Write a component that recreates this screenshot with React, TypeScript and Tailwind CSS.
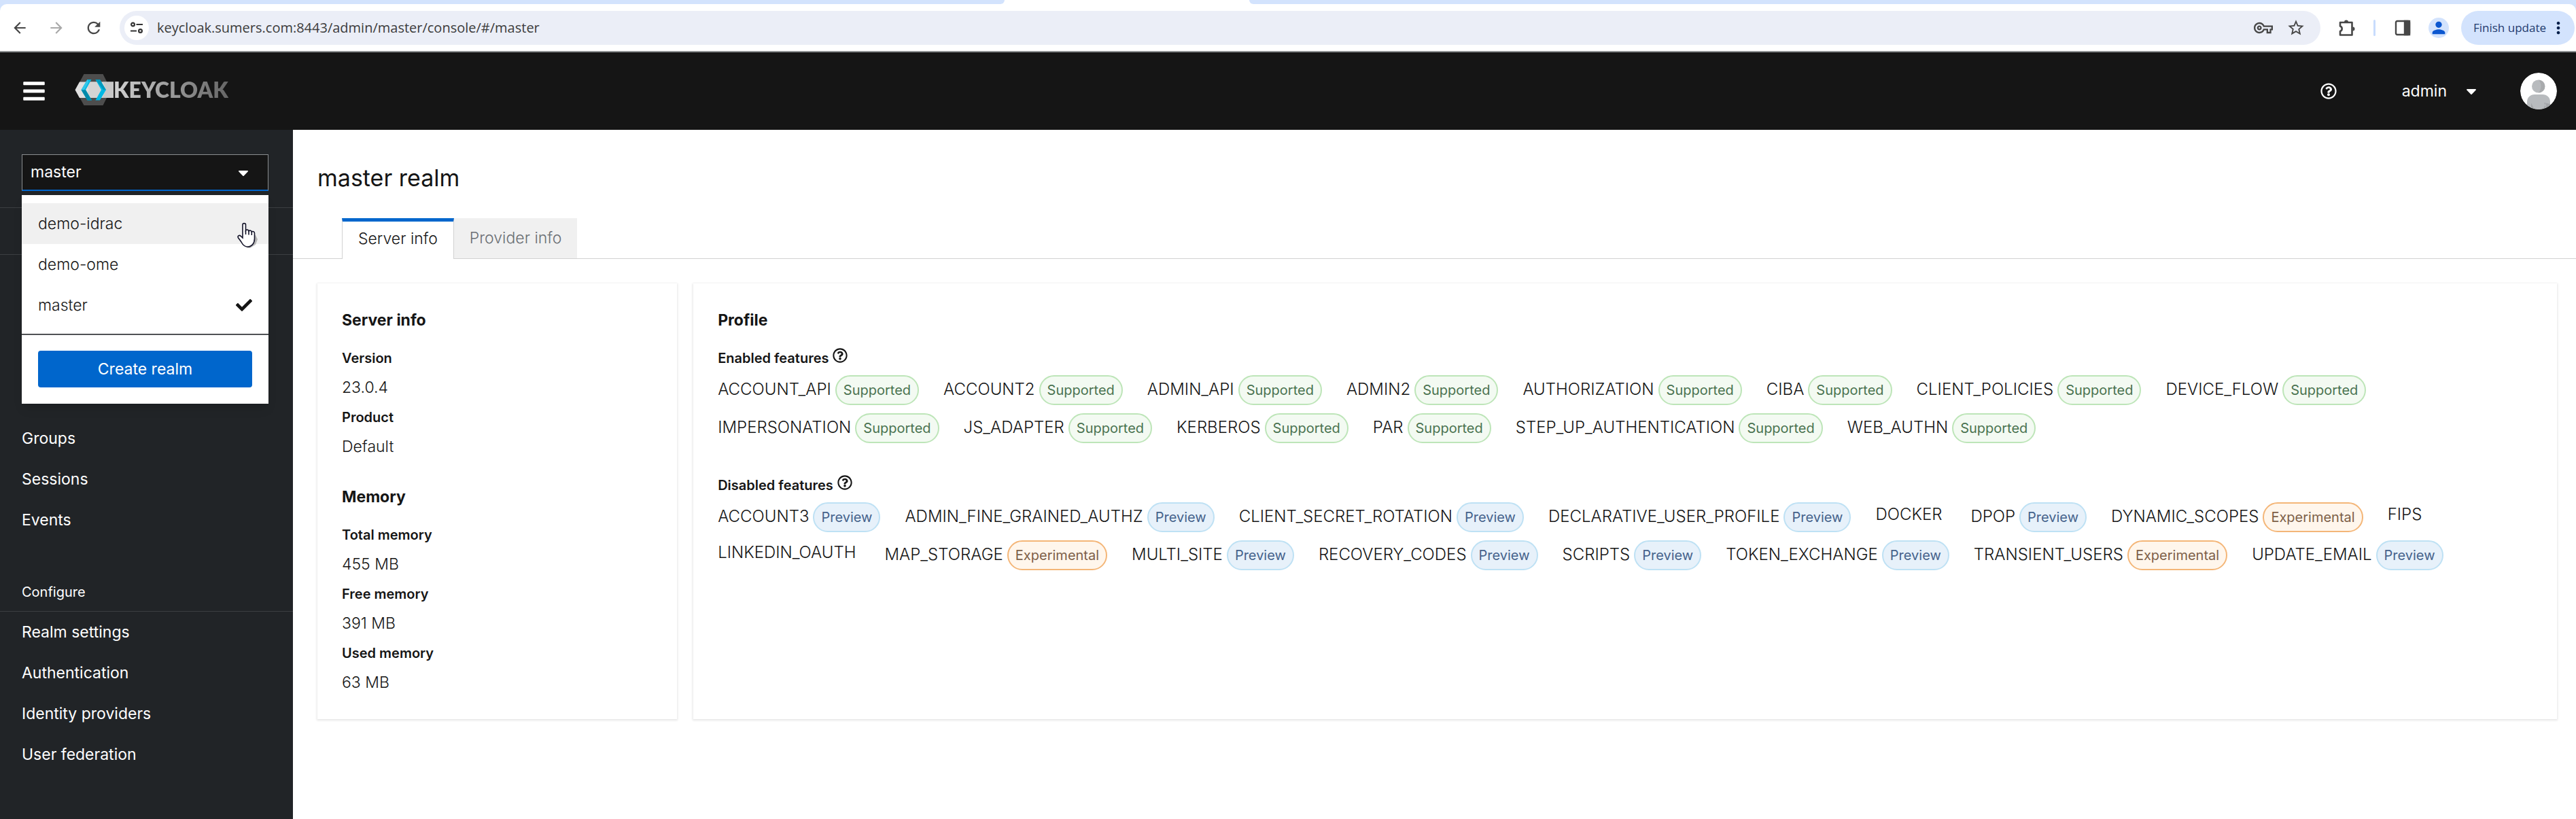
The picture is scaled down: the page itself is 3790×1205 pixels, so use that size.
import React from "react";
import { FaBars, FaCaretDown, FaCheck, FaRegQuestionCircle } from "react-icons/fa";
import {
  MdArrowBack,
  MdArrowForward,
  MdMoreVert,
  MdOutlineStarBorder,
  MdOutlineVpnKey,
  MdPerson,
  MdRefresh,
} from "react-icons/md";

type Level = "Supported" | "Preview" | "Experimental";
type Feature = { name: string; level?: Level };

const enabledFeatures: Feature[] = [
  { name: "ACCOUNT_API", level: "Supported" },
  { name: "ACCOUNT2", level: "Supported" },
  { name: "ADMIN_API", level: "Supported" },
  { name: "ADMIN2", level: "Supported" },
  { name: "AUTHORIZATION", level: "Supported" },
  { name: "CIBA", level: "Supported" },
  { name: "CLIENT_POLICIES", level: "Supported" },
  { name: "DEVICE_FLOW", level: "Supported" },
  { name: "IMPERSONATION", level: "Supported" },
  { name: "JS_ADAPTER", level: "Supported" },
  { name: "KERBEROS", level: "Supported" },
  { name: "PAR", level: "Supported" },
  { name: "STEP_UP_AUTHENTICATION", level: "Supported" },
  { name: "WEB_AUTHN", level: "Supported" },
];

const disabledFeatures: Feature[] = [
  { name: "ACCOUNT3", level: "Preview" },
  { name: "ADMIN_FINE_GRAINED_AUTHZ", level: "Preview" },
  { name: "CLIENT_SECRET_ROTATION", level: "Preview" },
  { name: "DECLARATIVE_USER_PROFILE", level: "Preview" },
  { name: "DOCKER" },
  { name: "DPOP", level: "Preview" },
  { name: "DYNAMIC_SCOPES", level: "Experimental" },
  { name: "FIPS" },
  { name: "LINKEDIN_OAUTH" },
  { name: "MAP_STORAGE", level: "Experimental" },
  { name: "MULTI_SITE", level: "Preview" },
  { name: "RECOVERY_CODES", level: "Preview" },
  { name: "SCRIPTS", level: "Preview" },
  { name: "TOKEN_EXCHANGE", level: "Preview" },
  { name: "TRANSIENT_USERS", level: "Experimental" },
  { name: "UPDATE_EMAIL", level: "Preview" },
];

const levelStyle: Record<Level, string> = {
  Supported: "border-[#bde5b8] bg-[#f3faf2] text-[#4a7350]",
  Preview: "border-[#bee1f4] bg-[#e7f1fa] text-[#46638c]",
  Experimental: "border-[#f4b678] bg-[#fff6ec] text-[#7d6048]",
};

function TuneIcon() {
  return (
    <svg viewBox="0 0 20 18" className="h-[18px] w-5" fill="none" stroke="#333" strokeWidth="2.2">
      <circle cx="4.5" cy="4" r="2.4" />
      <path d="M9.5 4H19M1 13.5h9" />
      <circle cx="15.5" cy="13.5" r="2.4" />
    </svg>
  );
}

function ExtensionIcon() {
  return (
    <svg viewBox="0 0 26 26" className="size-[26px]" fill="none" stroke="#474747" strokeWidth="2.6" strokeLinejoin="round">
      <path d="M3 5h17.5v18.5H3V18c3.600-1.200 3.600-6.300 0-7.500z" />
      <path d="M9 4.500a3 3 0 0 1 6 0zM21.500 11.500a3 3 0 0 1 0 6z" fill="#474747" stroke="none" />
    </svg>
  );
}

function SidePanelIcon() {
  return (
    <svg viewBox="0 0 24 24" className="size-6" fill="none" stroke="#474747" strokeWidth="2.4">
      <rect x="2" y="2" width="20" height="20" rx="2" />
      <path d="M15 2h7v20h-7z" fill="#474747" />
    </svg>
  );
}

function BrowserBar() {
  return (
    <div className="bg-[#d3e3fd]">
      <div className="flex h-[6px] bg-white">
        <div className="w-[39%] rounded-br-[10px] bg-[#d3e3fd]" />
        <div className="w-[360px]" />
        <div className="flex-1 rounded-bl-[10px] bg-[#d3e3fd]" />
      </div>
      <div className="flex h-[71px] items-center rounded-t-[10px] border-b-2 border-[#8e9192] bg-white pr-[2px] pl-4 font-['Open_Sans',sans-serif] text-[#474747]">
        <button aria-label="Back" className="mr-7 text-[26px]"><MdArrowBack /></button>
        <button aria-label="Forward" className="mr-7 text-[26px] text-[#a9a9a9]"><MdArrowForward /></button>
        <button aria-label="Reload" className="mr-6 text-[28px]"><MdRefresh /></button>
        <div className="flex h-[50px] min-w-0 flex-1 items-center rounded-full bg-[#ebeef7] pr-[22px] pl-[7px]">
          <button aria-label="Site information" className="mr-3 flex size-9 shrink-0 items-center justify-center rounded-full bg-white">
            <TuneIcon />
          </button>
          <input
            aria-label="Address"
            defaultValue="keycloak.sumers.com:8443/admin/master/console/#/master"
            className="min-w-0 flex-1 bg-transparent text-[20px] leading-8 text-[#3c3c3c] outline-none"
          />
          <button aria-label="Passwords" className="mr-5 text-[28px]"><MdOutlineVpnKey /></button>
          <button aria-label="Bookmark" className="text-[28px]"><MdOutlineStarBorder /></button>
        </div>
        <button aria-label="Extensions" className="ml-[26px]"><ExtensionIcon /></button>
        <span className="ml-[26px] h-6 w-[3px] rounded bg-[#c8dcfd]" />
        <button aria-label="Side panel" className="ml-7"><SidePanelIcon /></button>
        <button aria-label="Profile" className="ml-[26px] flex size-[30px] items-center justify-center rounded-full bg-[#d3e3fd] text-[28px] text-[#0b57d0]">
          <MdPerson />
        </button>
        <button className="ml-[18px] flex h-[50px] items-center gap-1 rounded-full bg-[#d3e3fd] pr-[10px] pl-[18px] text-[17px] text-[#1f3a6e]">
          Finish update
          <MdMoreVert className="text-[28px] text-[#041e49]" />
        </button>
      </div>
    </div>
  );
}

function Logo() {
  return (
    <a href="#/" aria-label="Keycloak" className="flex items-center pb-1">
      <svg viewBox="0 0 57 48" className="h-12 w-[57px]">
        <path d="M13.500 1h28L53 24 41.500 47h-28L1 24z" fill="#4d4d4d" />
        <path d="M7 12.500h50V36H7L.5 24.200z" fill="#e0e0e0" />
        <path d="M41 12.500h16V36H40l6-12z" fill="#c8c8c8" />
        <path d="M15 12.500h20l6 11.700L35 36H15l6-12z" fill="#d4d4d4" />
        <path d="M18.500 9h6L16 24.200 25 39.500h-6.500L9.500 24.200z" fill="#00b8e3" />
        <path d="M9.500 24.200h6.500L25 39.500h-6.500z" fill="#008aaa" />
        <path d="M9.500 24.200L18.500 9l2 3.500-6.500 11.700z" fill="#33c6e9" />
        <path d="M30.500 9H37l9 15.200L37 39.500h-6.500L39 24.200z" fill="#00b8e3" />
        <path d="M30.500 9H37l9 15.200h-4z" fill="#0099bd" />
      </svg>
      <span className="bg-linear-to-r from-[#d2d2d2] to-[#666] bg-clip-text font-['Lato',sans-serif] text-[32px] leading-10 font-extrabold text-transparent">
        KEYCLOAK
      </span>
    </a>
  );
}

function Avatar() {
  return (
    <svg viewBox="0 0 54 54" className="size-[54px] rounded-full">
      <circle cx="27" cy="27" r="27" fill="#fff" />
      <circle cx="26.500" cy="20" r="9.500" fill="#b8bbbe" />
      <path d="M27 10.500a9.500 9.500 0 0 1 0 19c4-5 5-13 0-19z" fill="#a9abad" />
      <path d="M10 48V43c0-7 5-11 11-11h12c6 0 11 4 11 11v5c-9 8-25 8-34 0z" fill="#b8bbbe" />
      <path d="M16 51v-6.500l4 8zM38 51v-6.500l-4 8zM35 44l9 2v3l-6 3z" fill="#a3a5a8" />
    </svg>
  );
}

function Masthead() {
  return (
    <header className="flex h-[114px] items-center bg-[#151515] pr-7 pl-8 text-white">
      <button aria-label="Global navigation" className="mr-[42px] text-[36px]"><FaBars /></button>
      <Logo />
      <div className="ml-auto flex items-center">
        <button aria-label="Help" className="mr-24 text-2xl"><FaRegQuestionCircle /></button>
        <button className="flex items-center gap-6 text-[23px] leading-9">
          admin
          <FaCaretDown className="text-2xl" />
        </button>
        <div className="ml-[60px]"><Avatar /></div>
      </div>
    </header>
  );
}

function HandCursor() {
  return (
    <svg viewBox="0 0 30 38" className="pointer-events-none absolute top-[40px] right-4 h-[38px] w-[30px]">
      <path d="M14 5l4 10 9 4 3 6-3 8-8 5h-6l10-8z" fill="#000" opacity=".25" />
      <path
        d="M8 3.500C8 1 12.500 1 12.500 3.500V12c1-1.500 4-1.200 4.500.8 1.300-1.200 4-.8 4.300 1.200 1.700-1 4.200-.2 4.200 2v8c0 7-4 12-10 12-5 0-7.500-3-9.500-7L1.300 22.500c-1-2.500 2-4.200 3.700-2.300L8 23z"
        fill="#fff"
        stroke="#15152a"
        strokeWidth="1.600"
      />
      <path d="M12.500 12v6M17 13v5.500M21.300 14v5" stroke="#15152a" strokeWidth="1.600" />
    </svg>
  );
}

function RealmSelector() {
  return (
    <div className="relative mr-9 ml-8">
      <button
        aria-haspopup="listbox"
        aria-expanded="true"
        className="flex h-[54px] w-full items-center justify-between border border-b-2 border-[#8a8d90] border-b-[#06c] bg-[#151515] pr-6 pl-3 text-[23px] text-white"
      >
        master
        <FaCaretDown className="text-2xl" />
      </button>
      <div className="absolute top-[60px] left-0 z-10 w-full bg-white pt-3 pb-6 text-[23px] font-light text-[#151515] shadow-lg">
        <ul>
          <li>
            <button className="flex h-[60px] w-full items-center bg-[#f0f0f0] px-6">demo-idrac</button>
          </li>
          <li>
            <button className="flex h-[60px] w-full items-center px-6">demo-ome</button>
          </li>
          <li>
            <button className="flex h-[60px] w-full items-center justify-between px-6">
              master
              <FaCheck className="text-2xl" />
            </button>
          </li>
        </ul>
        <hr className="mt-3 border-t-2 border-[#4f5255]" />
        <div className="px-6 pt-[23px]">
          <button className="h-[54px] w-full rounded bg-[#06c] font-normal text-white">Create realm</button>
        </div>
        <HandCursor />
      </div>
    </div>
  );
}

function NavItems({ items }: { items: string[] }) {
  return (
    <ul>
      {items.map((item) => (
        <li key={item}>
          <a href="#/" className="flex h-[60px] items-center px-8 text-[23px]">{item}</a>
        </li>
      ))}
    </ul>
  );
}

function Sidebar() {
  return (
    <aside className="w-[431px] shrink-0 bg-[#212427] pt-9 text-white">
      <div className="border-b border-[#3c3f42] pb-6"><RealmSelector /></div>
      <nav aria-label="Realm">
        <div className="h-[69px] border-b border-[#3c3f42]" />
        <div className="pt-60">
          <NavItems items={["Groups", "Sessions", "Events"]} />
        </div>
        <h2 className="border-b border-[#3c3f42] px-8 pt-[62px] pb-[14px] text-xl leading-7">Configure</h2>
        <NavItems items={["Realm settings", "Authentication", "Identity providers", "User federation"]} />
      </nav>
    </aside>
  );
}

function DescriptionList({ title, rows }: { title: string; rows: [string, string][] }) {
  return (
    <section className="mb-[38px] last:mb-0">
      <h2 className="mb-5 text-[23px] leading-9 font-bold">{title}</h2>
      <dl className="flex flex-col gap-2">
        {rows.map(([label, value]) => (
          <div key={label} className="flex flex-col gap-[7px]">
            <dt className="text-xl leading-9 font-semibold">{label}</dt>
            <dd className="text-[23px] leading-9 font-light">{value}</dd>
          </div>
        ))}
      </dl>
    </section>
  );
}

function FeatureItem({ name, level }: Feature) {
  if (!level) {
    return <li className="pr-1.5 text-2xl leading-9 font-light">{name}</li>;
  }
  return (
    <li className="flex gap-1.5 text-2xl leading-[42px] font-light">
      {name}
      <span className={`h-11 rounded-full border-2 px-[10px] text-xl leading-10 font-normal ${levelStyle[level]}`}>
        {level}
      </span>
    </li>
  );
}

function FeatureList({ title, features }: { title: string; features: Feature[] }) {
  return (
    <section>
      <h3 className="flex h-9 gap-1.5 text-xl leading-9 font-semibold">
        {title}
        <button aria-label={`More about ${title}`} className="self-start pt-[3px] text-[22px]"><FaRegQuestionCircle /></button>
      </h3>
      <ul className="mt-[7px] flex flex-wrap items-start gap-x-9 gap-y-3">
        {features.map((feature) => (
          <FeatureItem key={feature.name} {...feature} />
        ))}
      </ul>
    </section>
  );
}

const cardStyle = "bg-white px-9 pt-9 shadow-[0_1px_3px_1px_rgba(3,3,3,0.1)]";

function Content() {
  return (
    <main className="min-w-0 flex-1 bg-white text-[#151515]">
      <h1 className="px-9 pt-[47px] pb-9 text-[34px] leading-[47px]">master realm</h1>
      <div className="flex border-b border-[#d2d2d2] px-[72px] text-[23px] font-light" role="tablist">
        <button role="tab" aria-selected="true" className="-mb-px h-[60px] border-x border-t-5 border-x-[#d2d2d2] border-t-[#06c] bg-white px-[23px] pb-1">
          Server info
        </button>
        <button role="tab" aria-selected="false" className="h-[59px] bg-[#f0f0f0] px-[23px] text-[#6a6e73]">
          Provider info
        </button>
      </div>
      <div className="grid grid-cols-12 gap-6 py-9 pr-7 pl-9">
        <div className={`col-span-2 pb-9 ${cardStyle}`}>
          <DescriptionList title="Server info" rows={[["Version", "23.0.4"], ["Product", "Default"]]} />
          <DescriptionList
            title="Memory"
            rows={[["Total memory", "455 MB"], ["Free memory", "391 MB"], ["Used memory", "63 MB"]]}
          />
        </div>
        <div className={`col-span-10 ${cardStyle}`}>
          <h2 className="mb-5 text-[23px] leading-9 font-bold">Profile</h2>
          <div className="flex flex-col gap-[44px]">
            <FeatureList title="Enabled features" features={enabledFeatures} />
            <FeatureList title="Disabled features" features={disabledFeatures} />
          </div>
        </div>
      </div>
    </main>
  );
}

export default function App() {
  return (
    <div className="flex min-h-screen flex-col bg-white font-['Inter',sans-serif]">
      <BrowserBar />
      <Masthead />
      <div className="flex flex-1">
        <Sidebar />
        <Content />
      </div>
    </div>
  );
}
